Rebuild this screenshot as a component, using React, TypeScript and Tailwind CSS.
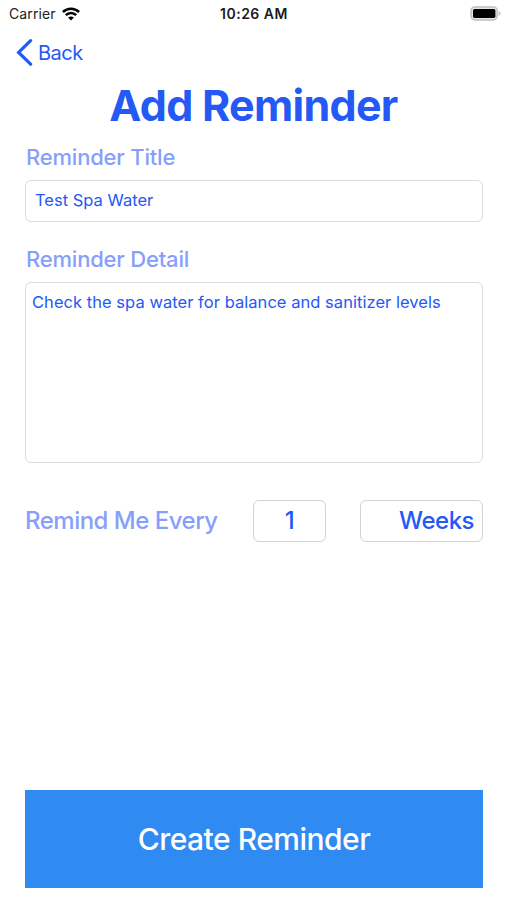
import React from "react";

const StatusBar = () => {
  return (
    <div className="grid h-[27px] grid-cols-3 items-center pl-[9px] pr-[6px] text-black">
      <div className="flex items-center gap-[6px]">
        <span className="whitespace-nowrap text-[14px] leading-none tracking-[0.1px] text-[#222]">Carrier</span>
        <svg width="18" height="14" viewBox="0 0 18 14" fill="none" stroke="currentColor" strokeWidth="2.5">
          <path d="M0.9 5C5.5 0.6 12.5 0.6 17.1 5" />
          <path d="M3.8 8.2C6.8 5.3 11.2 5.3 14.2 8.2" />
          <path d="M6.1 10.6C7.7 9 10.3 9 11.9 10.6L9 13.4Z" fill="currentColor" stroke="none" />
        </svg>
      </div>
      <span className="whitespace-nowrap pr-[2px] text-center text-[14px] font-semibold leading-none tracking-[0.5px] text-[#1a1a1a]">
        10:26 AM
      </span>
      <svg className="justify-self-end" width="31" height="16" viewBox="0 0 31 16">
        <rect x="1" y="0.9" width="26.2" height="13" rx="3.8" fill="#e6e6e6" stroke="#c0c0c0" strokeWidth="1.5" />
        <rect x="3" y="2.9" width="22.4" height="9" rx="1.6" fill="#000" />
        <path d="M28.6 5C31.2 6.1 31.2 8.8 28.6 9.9Z" fill="#c0c0c0" />
      </svg>
    </div>
  );
};

const App = () => {
  return (
    <div
      id="add-reminder"
      className="flex h-[900px] w-[507px] flex-col overflow-hidden bg-white font-['Inter',sans-serif] text-[#2459f5]"
    >
      <StatusBar />
      <button className="flex h-[50px] items-center gap-[5px] self-start pl-[16px]">
        <svg width="17" height="28" viewBox="0 0 17 28" fill="none" stroke="currentColor" strokeWidth="3.2">
          <path d="M14.6 2.6L2.6 14.4L14.6 26.2" strokeLinecap="round" />
        </svg>
        <span className="whitespace-nowrap pt-px text-[20px] leading-none tracking-[-0.5px]">Back</span>
      </button>

      <h1 className="h-[66px] whitespace-nowrap pt-[3px] text-center text-[43px] font-bold leading-[50px] tracking-[-0.7px]">
        Add Reminder
      </h1>

      <div className="flex flex-col pl-[25px] pr-[24px]">
        <label className="h-[37px] whitespace-nowrap pl-px text-[22px] font-medium leading-[28px] tracking-[-0.2px] text-[#879ffb]">
          Reminder Title
        </label>
        <div className="flex h-[42px] items-center rounded-[6px] border border-[#dcdcdc] px-[9px] pb-[2px] text-[16.5px]">
          <span className="whitespace-nowrap">Test Spa Water</span>
        </div>

        <label className="mt-[23px] h-[37px] whitespace-nowrap pl-px text-[22px] font-medium leading-[28px] tracking-[-0.2px] text-[#879ffb]">
          Reminder Detail
        </label>
        <div className="h-[181px] rounded-[6px] border border-[#dcdcdc] px-[6px] pt-[7px] text-[16.5px] leading-[24px]">
          <span className="whitespace-nowrap tracking-[0.04px]">
            Check the spa water for balance and sanitizer levels
          </span>
        </div>

        <div className="mt-[37px] flex h-[42px] items-center text-[24px] font-medium tracking-[-0.5px]">
          <span className="w-[228px] whitespace-nowrap text-[#879ffb]">Remind Me Every</span>
          <div className="flex h-full w-[73px] items-center justify-center rounded-[6px] border border-[#d2d2d2]">
            <span>1</span>
          </div>
          <div className="ml-auto flex h-full w-[123px] items-center justify-end rounded-[6px] border border-[#d2d2d2] pr-[8px]">
            <span>Weeks</span>
          </div>
        </div>

        <button className="mt-[248px] h-[98px] w-full bg-[#2f8af2] text-[30px] font-medium tracking-[-0.5px] text-white">
          <span className="whitespace-nowrap">Create Reminder</span>
        </button>
      </div>
    </div>
  );
};

export default App;
